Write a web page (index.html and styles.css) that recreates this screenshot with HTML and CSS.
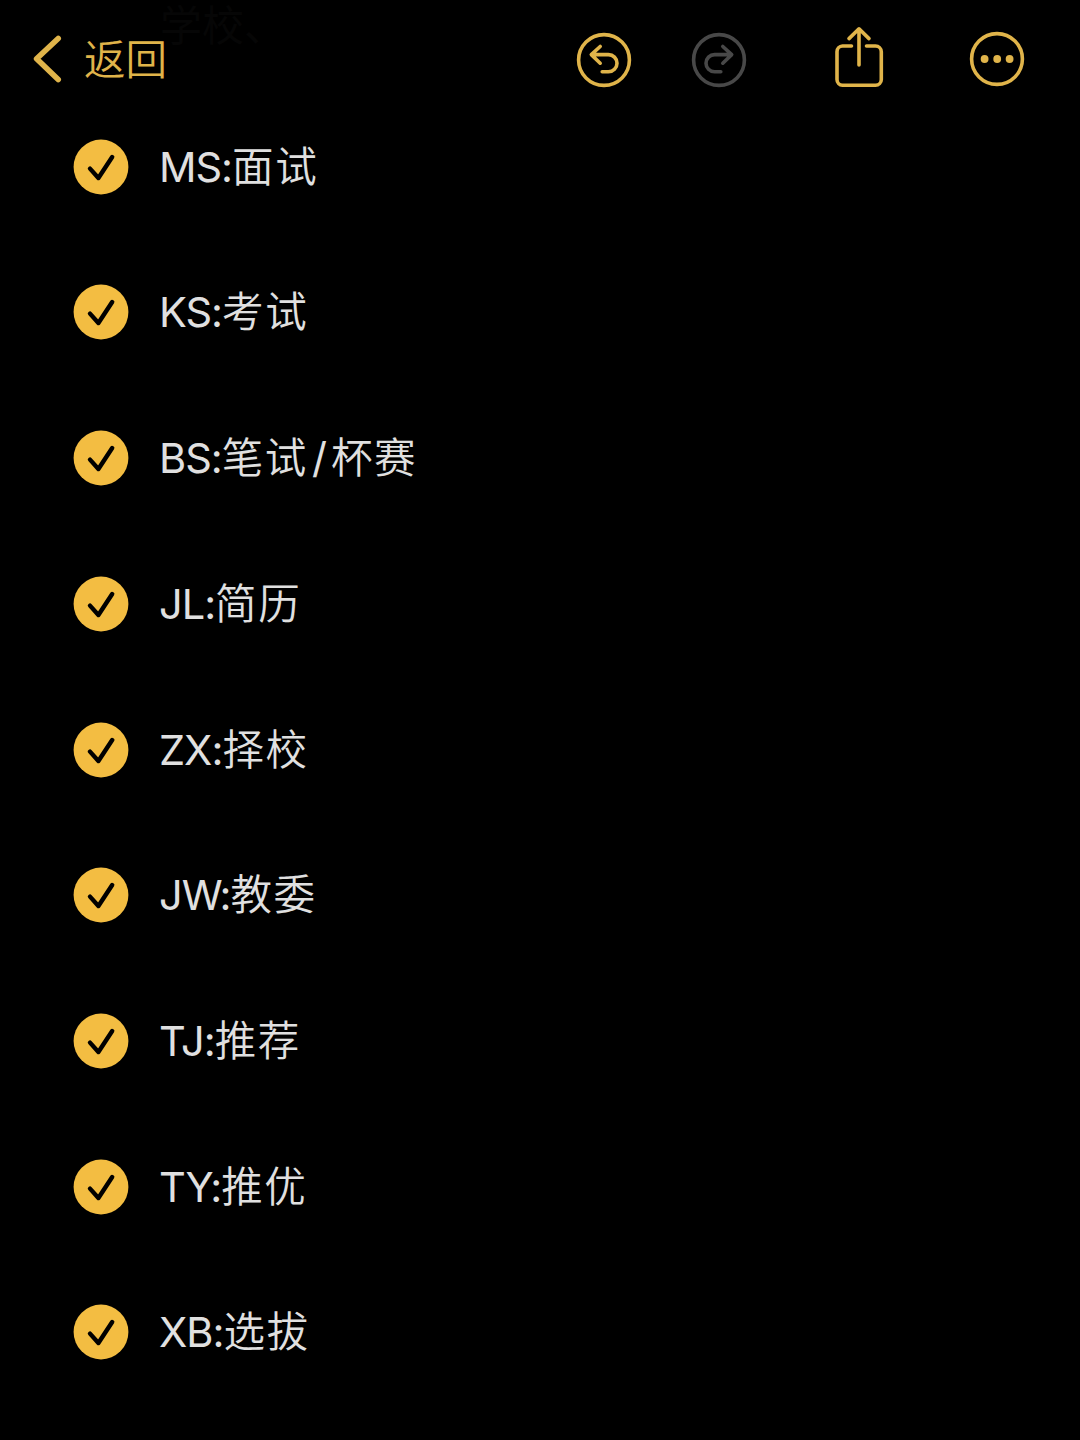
FILE: index.html
```html
<!DOCTYPE html>
<html lang="zh-CN">
<head>
    <meta charset="UTF-8">
    <title>备忘录</title>
    <link rel="stylesheet" href="styles.css">
</head>
<body>
    <svg class="defs" width="0" height="0">
        <symbol id="check" viewBox="0 0 56 56">
            <circle cx="28" cy="28" r="27.4" fill="#f3bd42"/>
            <path d="M17 29.6 L25.4 39 L39.2 18" fill="none" stroke="#000" stroke-width="4.4" stroke-linecap="round" stroke-linejoin="round"/>
        </symbol>
    </svg>

    <header class="navbar">
        <span class="scrolled-text">学校、</span>
        <a class="back">
            <svg width="30" height="50" viewBox="0 0 30 50">
                <path d="M26.2 4.5 L4.6 24.8 L26.2 45.6" fill="none" stroke="currentColor" stroke-width="5.6" stroke-linecap="round" stroke-linejoin="round"/>
            </svg>
            <span>返回</span>
        </a>
        <div class="tools">
            <svg class="undo" width="56" height="56" viewBox="0 0 56 56">
                <circle cx="28" cy="28" r="25.4"/>
                <path d="M24.2 14.5 L15.3 22.6 L24.2 31.2 M15.8 22.6 H32.4 A8.6 8.6 0 0 1 32.4 39.8 H26.2"/>
            </svg>
            <svg class="redo" width="56" height="56" viewBox="0 0 56 56">
                <circle cx="28" cy="28" r="25.4"/>
                <path d="M31.8 14.5 L40.7 22.6 L31.8 31.2 M40.2 22.6 H23.6 A8.6 8.6 0 0 0 23.6 39.8 H29.8"/>
            </svg>
            <svg class="share" width="52" height="64" viewBox="0 0 52 64">
                <path d="M18.5 21 H9.5 A5.8 5.8 0 0 0 4 26.8 V54.5 A5.8 5.8 0 0 0 9.5 60.3 H42.5 A5.8 5.8 0 0 0 48.3 54.5 V26.8 A5.8 5.8 0 0 0 42.5 21 H33.5"/>
                <path d="M26 40 V4 M16 13.6 L26 3.8 L36 13.6"/>
            </svg>
            <svg class="more" width="56" height="56" viewBox="0 0 56 56">
                <circle cx="28" cy="28" r="25.4"/>
                <g fill="currentColor" stroke="none">
                    <circle cx="15.6" cy="28" r="3.9"/>
                    <circle cx="28.2" cy="28" r="3.9"/>
                    <circle cx="40.6" cy="28" r="3.9"/>
                </g>
            </svg>
        </div>
    </header>

    <ul class="checklist">
        <li><svg><use href="#check"/></svg><span>MS:<b>面试</b></span></li>
        <li><svg><use href="#check"/></svg><span>KS:<b>考试</b></span></li>
        <li><svg><use href="#check"/></svg><span>BS:<b>笔试</b><i>/</i><b>杯赛</b></span></li>
        <li><svg><use href="#check"/></svg><span>JL:<b>简历</b></span></li>
        <li><svg><use href="#check"/></svg><span>ZX:<b>择校</b></span></li>
        <li><svg><use href="#check"/></svg><span>JW:<b>教委</b></span></li>
        <li><svg><use href="#check"/></svg><span>TJ:<b>推荐</b></span></li>
        <li><svg><use href="#check"/></svg><span>TY:<b>推优</b></span></li>
        <li><svg><use href="#check"/></svg><span>XB:<b>选拔</b></span></li>
    </ul>
</body>
</html>
```

FILE: styles.css
```css
body {
    margin: 0;
    height: 1440px;
    overflow: hidden;
    background: #000;
    color: #e0e0e0;
    font-family: Inter, "Noto Sans CJK SC", sans-serif;
    font-weight: 400;
}
.defs {
    position: absolute;
}
.navbar {
    position: relative;
    display: flex;
    justify-content: space-between;
    align-items: center;
    box-sizing: border-box;
    height: 120px;
    padding: 0 55px 2px 32px;
    color: #e0b44a;
}
/* previous line showing through the bar */
.scrolled-text {
    position: absolute;
    left: 160px;
    top: -8px;
    font-size: 42px;
    color: #060606;
}
.back {
    display: flex;
    align-items: center;
    gap: 22px;
    font-size: 41.5px;
}
.back span {
    font-family: "Noto Sans CJK SC", sans-serif;
    font-weight: 350;
    line-height: 56px;
    padding-bottom: 4px;
}
.tools {
    display: flex;
    align-items: center;
}
.tools svg {
    fill: none;
    stroke: currentColor;
    stroke-width: 3.6;
    stroke-linecap: round;
    stroke-linejoin: round;
}
.undo, .redo {
    margin-top: 2px;
}
.redo {
    margin-left: 59px;
    color: #484848;
}
.share {
    margin: -4px 0 0 86px;
}
.more {
    margin-left: 84px;
}
.undo {
    margin-left: -1px;
}
.checklist {
    margin: 0;
    padding: 0 0 0 73px;
    list-style: none;
}
.checklist li {
    display: flex;
    align-items: center;
    gap: 30px;
    height: 56px;
    margin: 18.8px 0 89.7px;
    font-size: 41.5px;
    line-height: 56px;
    font-feature-settings: "calt" 0;
}
.checklist li + li {
    margin-top: 0;
}
.checklist svg {
    width: 56px;
    height: 56px;
}
.checklist span {
    padding-bottom: 3px;
    letter-spacing: -1px;
}
.checklist b {
    font-family: "Noto Sans CJK SC", sans-serif;
    font-weight: 350;
    letter-spacing: 1.6px;
}
.checklist i {
    font-style: normal;
    margin: 0 5px 0 4px;
}
```
